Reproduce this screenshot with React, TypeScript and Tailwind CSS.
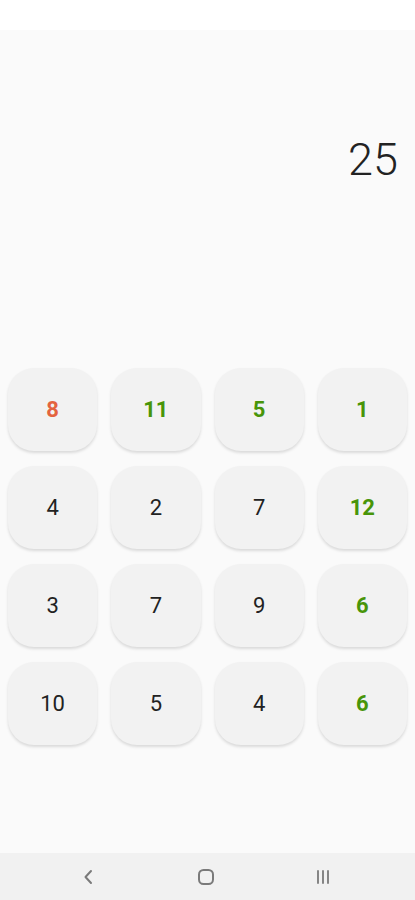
const cells: { n: number; c: 'red' | 'green' | 'plain' }[] = [
  { n: 8, c: 'red' }, { n: 11, c: 'green' }, { n: 5, c: 'green' }, { n: 1, c: 'green' },
  { n: 4, c: 'plain' }, { n: 2, c: 'plain' }, { n: 7, c: 'plain' }, { n: 12, c: 'green' },
  { n: 3, c: 'plain' }, { n: 7, c: 'plain' }, { n: 9, c: 'plain' }, { n: 6, c: 'green' },
  { n: 10, c: 'plain' }, { n: 5, c: 'plain' }, { n: 4, c: 'plain' }, { n: 6, c: 'green' },
]

const colorClass = {
  red: 'text-[#e4633f] font-bold',
  green: 'text-[#489509] font-bold',
  plain: 'text-[#222222] font-normal',
}

export default function App() {
  return (
    <div className="flex h-[900px] flex-col bg-white font-['Roboto',sans-serif]">
      {/* status bar */}
      <div className="h-[30px] bg-white" />

      <main className="flex flex-1 flex-col bg-[#fafafa]">
        <div className="mt-[107px] h-[45px] pr-[17px] text-right text-[45px] leading-none font-light text-[#222222]">
          25
        </div>

        <div className="mt-[186px] grid grid-cols-4 gap-x-[14px] gap-y-[15px] px-2">
          {cells.map((cell, i) => (
            <button
              key={i}
              className={`flex h-[83px] items-center justify-center rounded-[26px] bg-[#f2f2f2] text-[22px] shadow-[0_2px_3px_rgba(0,0,0,0.13)] ${colorClass[cell.c]}`}
            >
              {cell.n}
            </button>
          ))}
        </div>
      </main>

      {/* navigation bar */}
      <nav className="flex h-[47px] items-center bg-[#f1f1f1]">
        <div className="flex flex-1 justify-center pl-[30px]">
          <svg width="10" height="16" viewBox="0 0 10 16" fill="none">
            <path d="M8 2 L2.5 8 L8 14" stroke="#7a7a7a" strokeWidth="2" strokeLinecap="round" strokeLinejoin="round" />
          </svg>
        </div>
        <div className="flex flex-1 justify-center pl-[2px]">
          <svg width="18" height="18" viewBox="0 0 18 18" fill="none">
            <rect x="2" y="2" width="14" height="14" rx="4.5" stroke="#7a7a7a" strokeWidth="2" />
          </svg>
        </div>
        <div className="flex flex-1 justify-center pr-[34px]">
          <svg width="16" height="16" viewBox="0 0 16 16" fill="none">
            <path d="M3 2 V14 M8 2 V14 M13 2 V14" stroke="#7a7a7a" strokeWidth="1.8" strokeLinecap="round" />
          </svg>
        </div>
      </nav>
    </div>
  )
}
